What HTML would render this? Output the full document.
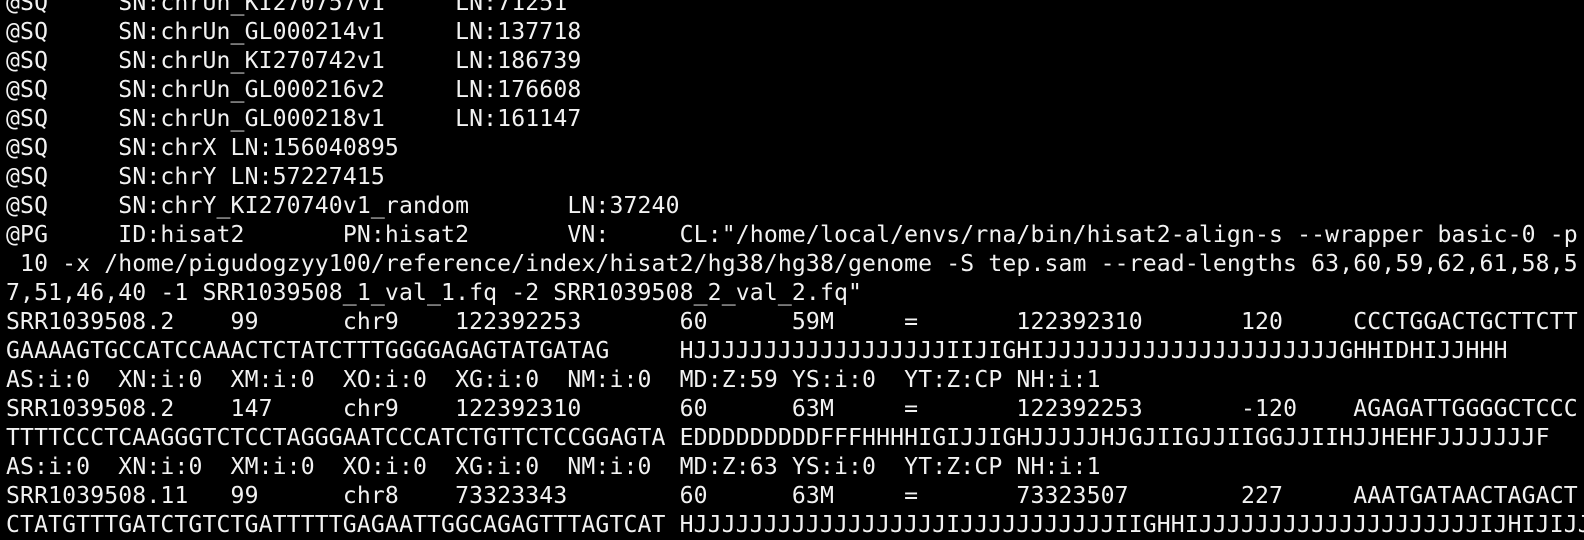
<!DOCTYPE html>
<html><head><meta charset="utf-8"><style>
html,body{margin:0;padding:0;background:#000;width:1584px;height:521px;overflow:hidden}
pre{margin:0;position:absolute;left:6px;top:-11px;color:#f2f2f2;font-family:"DejaVu Sans Mono","Liberation Mono",monospace;font-size:23.1px;line-height:29px;tab-size:8;-moz-tab-size:8;letter-spacing:0.13px}
</style></head><body><pre>@SQ	SN:chrUn_KI270757v1	LN:71251
@SQ	SN:chrUn_GL000214v1	LN:137718
@SQ	SN:chrUn_KI270742v1	LN:186739
@SQ	SN:chrUn_GL000216v2	LN:176608
@SQ	SN:chrUn_GL000218v1	LN:161147
@SQ	SN:chrX	LN:156040895
@SQ	SN:chrY	LN:57227415
@SQ	SN:chrY_KI270740v1_random	LN:37240
@PG	ID:hisat2	PN:hisat2	VN:	CL:"/home/local/envs/rna/bin/hisat2-align-s --wrapper basic-0 -p
 10 -x /home/pigudogzyy100/reference/index/hisat2/hg38/hg38/genome -S tep.sam --read-lengths 63,60,59,62,61,58,5
7,51,46,40 -1 SRR1039508_1_val_1.fq -2 SRR1039508_2_val_2.fq"
SRR1039508.2	99	chr9	122392253	60	59M	=	122392310	120	CCCTGGACTGCTTCTT
GAAAAGTGCCATCCAAACTCTATCTTTGGGGAGAGTATGATAG	HJJJJJJJJJJJJJJJJJJIIJIGHIJJJJJJJJJJJJJJJJJJJJJGHHIDHIJJHHH
AS:i:0	XN:i:0	XM:i:0	XO:i:0	XG:i:0	NM:i:0	MD:Z:59	YS:i:0	YT:Z:CP	NH:i:1
SRR1039508.2	147	chr9	122392310	60	63M	=	122392253	-120	AGAGATTGGGGCTCCC
TTTTCCCTCAAGGGTCTCCTAGGGAATCCCATCTGTTCTCCGGAGTA	EDDDDDDDDDFFFHHHHIGIJJIGHJJJJJHJGJIIGJJIIGGJJIIHJJHEHFJJJJJJJF
AS:i:0	XN:i:0	XM:i:0	XO:i:0	XG:i:0	NM:i:0	MD:Z:63	YS:i:0	YT:Z:CP	NH:i:1
SRR1039508.11	99	chr8	73323343	60	63M	=	73323507	227	AAATGATAACTAGACT
CTATGTTTGATCTGTCTGATTTTTGAGAATTGGCAGAGTTTAGTCAT	HJJJJJJJJJJJJJJJJJJIJJJJJJJJJJJIIGHHIJJJJJJJJJJJJJJJJJJJJIJHIJIJJJJI</pre>
</body></html>
